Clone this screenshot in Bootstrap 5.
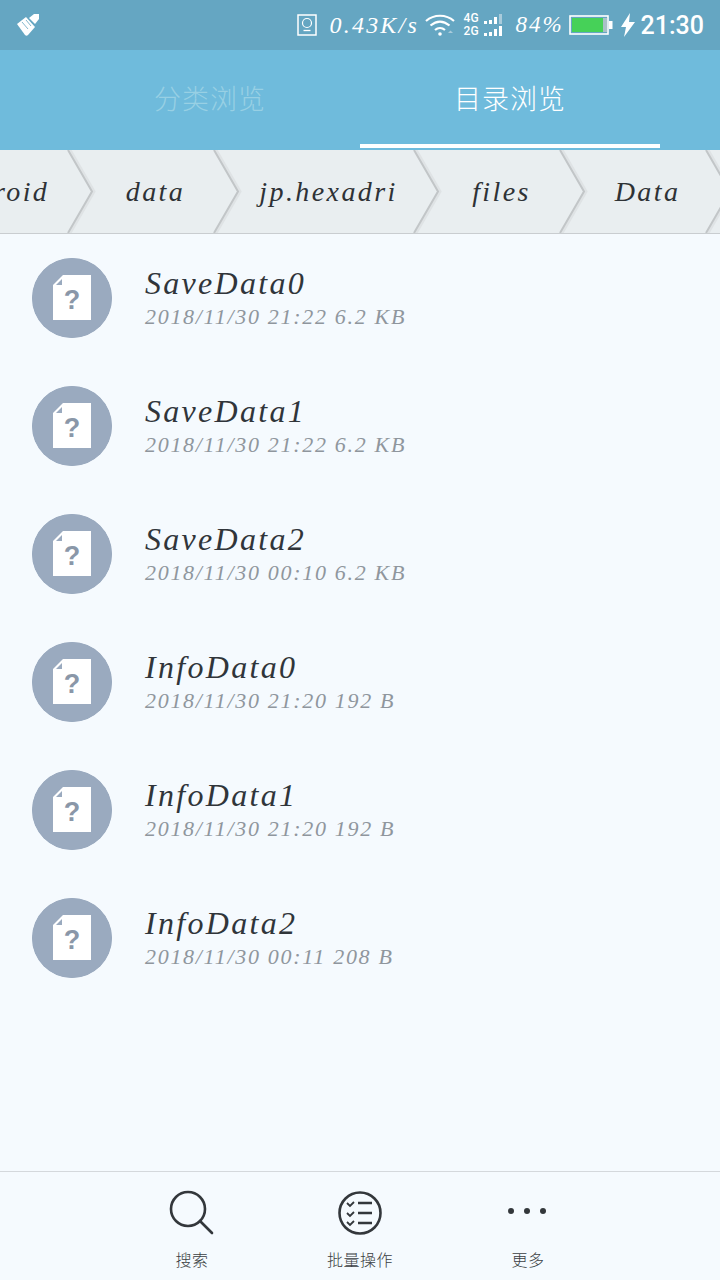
<!DOCTYPE html>
<html>
<head>
    <title>File browser</title>
    <link rel="stylesheet" href="https://cdn.jsdelivr.net/npm/bootstrap@5.3.0/dist/css/bootstrap.min.css">
    <style>
        body { width: 720px; height: 1280px; overflow: hidden; background: #f5fafe; font-family: "Liberation Serif", "Noto Sans CJK SC", serif; }
        .hand { font-family: "Liberation Serif", "Noto Sans CJK SC", serif; font-style: italic; }
        .status-strip { height: 50px; background: #65a6c2; color: #fff; padding: 0 16px 0 17px; }
        .speed-text { font-size: 24px; letter-spacing: 2.2px; margin: 0 7px 0 12px; width: 88px; white-space: nowrap; }
        .pct-text { font-size: 23px; letter-spacing: 2px; margin: 0 8px 0 13px; width: 45px; white-space: nowrap; }
        .clock-text { font-family: Roboto, sans-serif; font-weight: 500; font-size: 25px; margin-left: 6px; line-height: 1; }
        .net-wrap { margin-left: 9px; }
        .net-label { font-family: Roboto, sans-serif; font-size: 12px; line-height: 13px; font-weight: 500; }
        .tab-strip { height: 100px; background: #6fbbdc; padding: 0 60px; }
        .tab-item { width: 300px; height: 100px; line-height: 96px; text-align: center; font-family: "Noto Sans CJK SC", sans-serif; font-weight: 300; font-size: 27px; letter-spacing: 1px; color: #98d0e4; }
        .tab-item.is-active { color: #fff; border-bottom: 4px solid #fff; height: 98px; }
        .crumb-strip { height: 84px; background: #e9eef0; border-bottom: 1px solid #c9cdd0; overflow: hidden; }
        .crumb-seg { position: relative; flex: none; height: 83px; line-height: 84px; font-size: 28px; letter-spacing: 2.4px; color: #2e3236; text-align: center; padding-left: 29px; white-space: nowrap; }
        .crumb-seg svg { position: absolute; top: 0; right: -28px; z-index: 1; }
        .crumb-first { width: 68px; padding: 0; text-align: left; text-indent: -6px; }
        .file-row { height: 128px; padding: 24px 0 0 32px; }
        .file-badge { width: 80px; height: 80px; border-radius: 50%; background: #9aaabf; flex: none; }
        .file-info { margin-left: 33px; }
        .file-name { font-size: 32px; line-height: 34px; letter-spacing: 2.3px; color: #30353a; margin-top: 8px; white-space: nowrap; }
        .file-meta { font-size: 22px; line-height: 26px; letter-spacing: 1.7px; color: #8f969d; white-space: nowrap; margin-top: 4px; }
        .list-area { height: 937px; }
        .foot-strip { height: 109px; border-top: 1px solid #d4d8dc; background: #f5fafe; padding: 0 108px; }
        .foot-item { width: 168px; text-align: center; color: #3a3e42; }
        .foot-icon { height: 60px; padding-top: 18px; }
        .foot-label { font-family: "Noto Sans CJK SC", sans-serif; font-weight: 300; font-size: 16px; line-height: 20px; margin-top: 17px; letter-spacing: .5px; }
    </style>
</head>
<body class="m-0">
    <div class="status-strip d-flex align-items-center">
        <svg width="24" height="22" viewBox="0 0 24 22"><path fill="#fff" d="M0 10 9 3l9 10-7 8c-1 1-2 1-3 0z"/><path fill="#fff" d="M12 4l5-4h5v5l-4 5z"/><path d="M5 8l6 7M9 6l5 6" stroke="#65a6c2" stroke-width=".8"/></svg>
        <div class="ms-auto d-flex align-items-center">
            <svg width="21" height="22" viewBox="0 0 21 22"><rect x="1" y="1" width="18" height="20" fill="none" stroke="#fff" stroke-width="1.500"/><circle cx="10" cy="9" r="4.500" fill="none" stroke="#fff" stroke-width="1.200"/><path d="M6.500 16.500h7" stroke="#fff" stroke-width="1.300"/></svg>
            <span class="hand speed-text">0.43K/s</span>
            <svg width="30" height="24" viewBox="0 0 30 24" fill="none" stroke="#fff" stroke-width="2.200"><path d="M1 8c8-7 20-7 28 0M5.500 12.500c6-5 13-5 19 0M10 17c3-2.600 7-2.600 10 0"/><circle cx="15" cy="21" r="1.800" fill="#fff" stroke="none"/><path d="M23 20l2.500-2.500L28 20z" fill="#a9cbdb" stroke="none"/></svg>
            <div class="net-wrap d-flex align-items-center">
                <div class="net-label">4G<br>2G</div>
                <svg width="20" height="24" viewBox="0 0 20 24" fill="#fff" class="ms-1"><rect x="1" y="8" width="3" height="3"/><rect x="6" y="7" width="3" height="4"/><rect x="11" y="4" width="3" height="7"/><rect x="16" y="1" width="3" height="10" fill="#a9cbdb"/><rect x="1" y="20" width="3" height="3"/><rect x="6" y="19" width="3" height="4"/><rect x="11" y="16" width="3" height="7"/><rect x="16" y="13" width="3" height="10"/></svg>
            </div>
            <span class="hand pct-text">84%</span>
            <svg width="44" height="20" viewBox="0 0 44 20"><rect x="1" y="1" width="38" height="18" fill="none" stroke="#fff" stroke-width="1.600"/><rect x="3" y="3" width="31" height="14" fill="#46d158"/><rect x="34" y="3" width="4" height="14" fill="#a9c0c8"/><rect x="40" y="6" width="3.500" height="8" fill="#fff"/></svg>
            <svg width="14" height="24" viewBox="0 0 14 24" class="ms-2"><path fill="#fff" d="M9 0 0 14h5l-2 10 11-15H8z"/></svg>
            <span class="clock-text">21:30</span>
        </div>
    </div>

    <div class="tab-strip d-flex">
        <div class="tab-item">分类浏览</div>
        <div class="tab-item is-active">目录浏览</div>
    </div>

    <div class="crumb-strip d-flex hand" id="crumbs"></div>

    <div class="list-area" id="fileList"></div>

    <div class="foot-strip d-flex">
        <div class="foot-item">
            <div class="foot-icon"><svg width="46" height="46" viewBox="0 0 46 46" fill="none" stroke="#33373b" stroke-width="2.600"><circle cx="19" cy="19" r="17"/><path d="M31 31l12 12" stroke-linecap="round"/></svg></div>
            <div class="foot-label">搜索</div>
        </div>
        <div class="foot-item">
            <div class="foot-icon"><svg width="46" height="46" viewBox="0 0 46 46" fill="none" stroke="#33373b"><circle cx="23" cy="23" r="20.500" stroke-width="2.600"/><path d="M10 13l3 3 4-4M10 23l3 3 4-4M10 32l3 3 4-4" stroke-width="1.800"/><path d="M21 13h14M21 23h14M21 33h14" stroke-width="2.400"/></svg></div>
            <div class="foot-label">批量操作</div>
        </div>
        <div class="foot-item">
            <div class="foot-icon"><svg width="46" height="46" viewBox="0 0 46 46" fill="#33373b"><circle cx="6" cy="21" r="3"/><circle cx="22" cy="21" r="3"/><circle cx="38" cy="21" r="3"/></svg></div>
            <div class="foot-label">更多</div>
        </div>
    </div>

    <script src="https://cdn.jsdelivr.net/npm/bootstrap@5.3.0/dist/js/bootstrap.bundle.min.js"></script>
    <script>
        const chevron = `<svg width="30" height="83" viewBox="0 0 30 83" fill="none"><path d="M4 0l24 41.500L4 83" stroke="#dfe3e5" stroke-width="3"/><path d="M2 0l24 41.500L2 83" stroke="#c2c6c8" stroke-width="2"/></svg>`;
        const crumbs = [["roid", 68], ["data", 146], ["jp.hexadri", 200], ["files", 146], ["Data", 146]];
        document.getElementById('crumbs').innerHTML = crumbs.map((c, i) =>
            `<div class="crumb-seg ${i == 0 ? 'crumb-first' : ''}" style="width:${c[1]}px">${c[0]}${chevron}</div>`).join('');

        const files = [
            ["SaveData0", "2018/11/30 21:22 6.2 KB"],
            ["SaveData1", "2018/11/30 21:22 6.2 KB"],
            ["SaveData2", "2018/11/30 00:10 6.2 KB"],
            ["InfoData0", "2018/11/30 21:20 192 B"],
            ["InfoData1", "2018/11/30 21:20 192 B"],
            ["InfoData2", "2018/11/30 00:11 208 B"]
        ];
        const badge = `<svg class="file-badge" viewBox="0 0 80 80">
            <circle cx="40" cy="40" r="40" fill="#9aaabf"/>
            <path d="M31 17h28v45H21V27z" fill="#fff"/>
            <path d="M24 27l6-6v6z" fill="#9aaabf"/>
            <text x="40" y="51" text-anchor="middle" font-family="Liberation Sans" font-weight="700" font-size="27" fill="#8a97a8">?</text>
        </svg>`;
        document.getElementById('fileList').innerHTML = files.map(f => `
            <div class="file-row d-flex">
                ${badge}
                <div class="file-info hand">
                    <div class="file-name">${f[0]}</div>
                    <div class="file-meta">${f[1]}</div>
                </div>
            </div>`).join('');
    </script>
</body>
</html>
